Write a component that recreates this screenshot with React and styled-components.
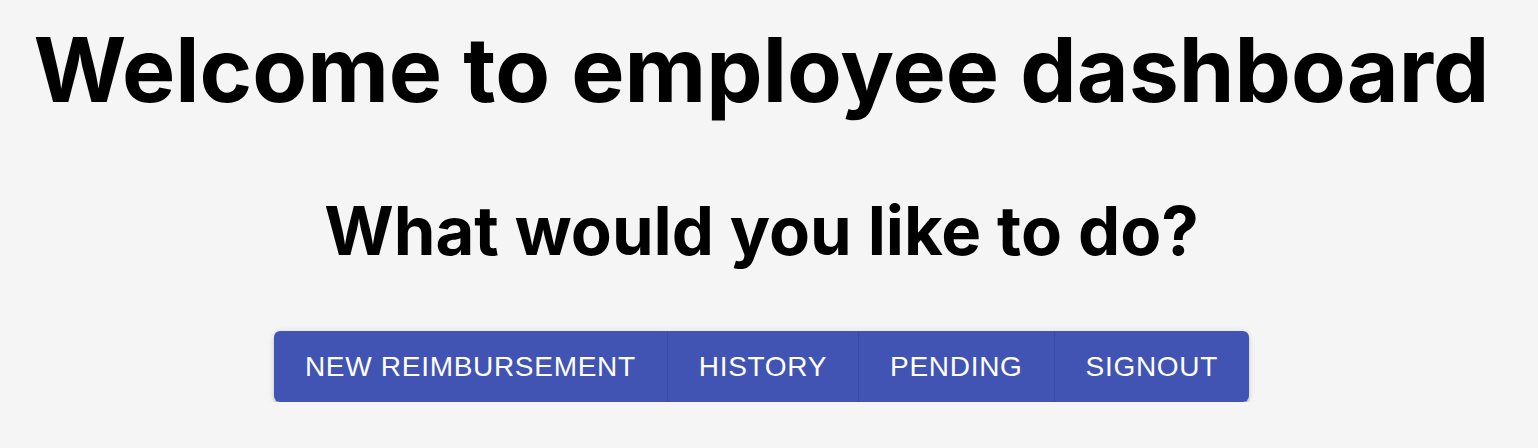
import React from "react";
import styled, { createGlobalStyle } from "styled-components";

const GlobalStyle = createGlobalStyle`
  html, body {
    margin: 0;
    padding: 0;
    background: #f5f5f5;
  }
`;

const Page = styled.main`
  width: 1523px;
  display: flex;
  flex-direction: column;
  align-items: center;
  font-family: Inter, "Liberation Sans", sans-serif;
  color: #000;
`;

const Title = styled.h1`
  margin: 16px 0 0;
  font-size: 89.5px;
  line-height: 108px;
  font-weight: 700;
`;

const Subtitle = styled.h2`
  margin: 67px 0 0;
  font-size: 67px;
  line-height: 80px;
  font-weight: 700;
`;

const ButtonGroup = styled.div`
  display: inline-flex;
  margin-top: 60px;
  border-radius: 6px;
  box-shadow: 0 4px 2px -2px rgba(0, 0, 0, 0.22), 0 3px 3px 0 rgba(0, 0, 0, 0.14),
    0 1px 7px 0 rgba(0, 0, 0, 0.12);
`;

const GroupButton = styled.button`
  height: 71px;
  padding: 0 31px;
  border: none;
  border-right: 1px solid #3a4ba6;
  background: #4154b3;
  color: #fff;
  font-family: "Liberation Sans", Arial, sans-serif;
  font-size: 28px;
  letter-spacing: 0.7px;
  text-transform: uppercase;
  cursor: pointer;

  &:first-child {
    border-radius: 6px 0 0 6px;
  }

  &:last-child {
    border-right: none;
    border-radius: 0 6px 6px 0;
  }
`;

const actions = ["New Reimbursement", "History", "Pending", "Signout"];

function App() {
  return (
    <>
      <GlobalStyle />
      <Page>
        <Title>Welcome to employee dashboard</Title>
        <Subtitle>What would you like to do?</Subtitle>
        <ButtonGroup>
          {actions.map((label) => (
            <GroupButton key={label}>{label}</GroupButton>
          ))}
        </ButtonGroup>
      </Page>
    </>
  );
}

export default App;
